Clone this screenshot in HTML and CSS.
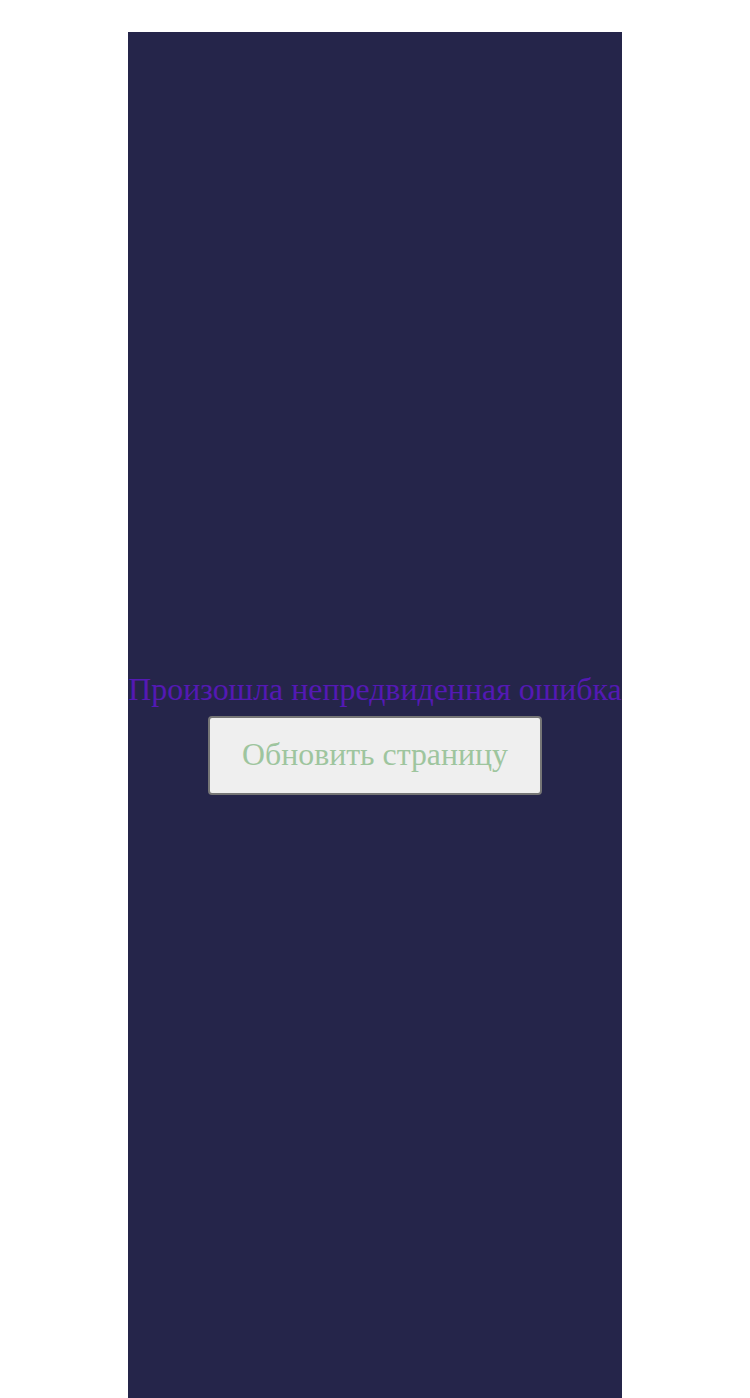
FILE: index.html
```html
<!DOCTYPE html>
<html lang="ru">
<head>
<meta charset="utf-8">
<title>Ошибка</title>
<link rel="stylesheet" href="styles.css">
</head>
<body>
<div class="page">
  <div class="panel">
    <div class="message">Произошла непредвиденная ошибка</div>
    <button class="reload" type="button">Обновить страницу</button>
  </div>
</div>
</body>
</html>
```
FILE: styles.css
```css
html, body {
  margin: 0;
  padding: 0;
  background: #ffffff;
}
.page {
  padding-top: 32px;
  display: flex;
  justify-content: center;
}
.panel {
  background: #25254a;
  min-height: calc(100vh + 4px);
  display: flex;
  flex-direction: column;
  align-items: center;
  justify-content: center;
  font-family: "Liberation Serif", "Times New Roman", serif;
}
.message {
  font-size: 31.9px;
  color: #5419b4;
  white-space: nowrap;
}
.reload {
  margin-top: 8px;
  font-family: "Liberation Serif", "Times New Roman", serif;
  font-size: 31.8px;
  color: #9ec59e;
  background: #efefef;
  border: 2px solid #767676;
  border-radius: 4px;
  padding: 19.5px 32px;
}
```
